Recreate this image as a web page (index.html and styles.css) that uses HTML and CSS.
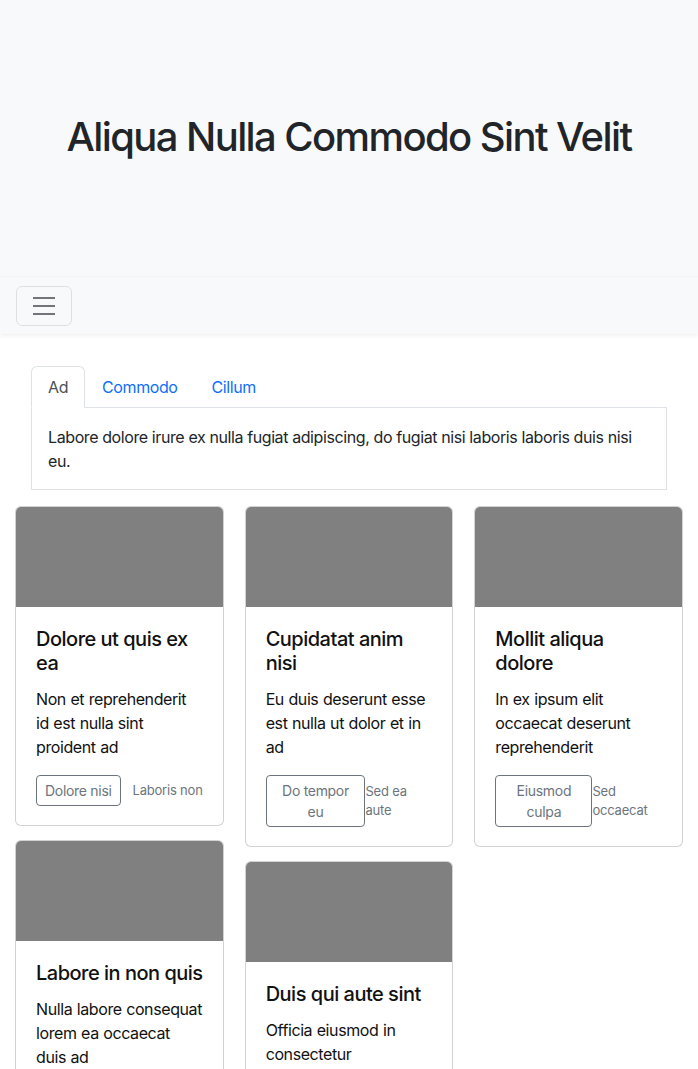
FILE: index.html
```html
<!DOCTYPE html>
<html lang="en">
<head>
<meta charset="utf-8">
<title>Aliqua Nulla Commodo Sint Velit</title>
<link rel="stylesheet" href="styles.css">
</head>
<body>
<header class="hero">
  <h1 class="hero-title">Aliqua Nulla Commodo Sint Velit</h1>
</header>
<nav class="navbar">
  <button class="toggler" type="button" aria-label="Toggle navigation">
    <svg width="30" height="30" viewBox="0 0 30 30" aria-hidden="true">
      <path d="M4 7h22M4 15h22M4 23h22" stroke="#727579" stroke-width="2" stroke-linecap="butt" fill="none"/>
    </svg>
  </button>
</nav>
<main class="main">
  <section class="tabs">
    <ul class="tab-list">
      <li><a class="tab active" href="#">Ad</a></li>
      <li><a class="tab" href="#">Commodo</a></li>
      <li><a class="tab" href="#">Cillum</a></li>
    </ul>
    <div class="tab-pane">Labore dolore irure ex nulla fugiat adipiscing, do fugiat nisi laboris laboris duis nisi eu.</div>
  </section>
  <section class="cards">
    <div class="col">
      <article class="card">
        <div class="card-img"></div>
        <div class="card-body">
          <h5 class="card-title">Dolore ut quis ex ea</h5>
          <p class="card-text">Non et reprehenderit id est nulla sint proident ad</p>
          <div class="card-foot">
            <a class="btn" href="#">Dolore nisi</a>
            <small class="muted">Laboris non</small>
          </div>
        </div>
      </article>
      <article class="card">
        <div class="card-img"></div>
        <div class="card-body">
          <h5 class="card-title">Labore in non quis</h5>
          <p class="card-text">Nulla labore consequat lorem ea occaecat duis ad</p>
          <div class="card-foot">
            <a class="btn" href="#">Anim sint</a>
            <small class="muted">Ut labore</small>
          </div>
        </div>
      </article>
    </div>
    <div class="col">
      <article class="card">
        <div class="card-img"></div>
        <div class="card-body">
          <h5 class="card-title">Cupidatat anim nisi</h5>
          <p class="card-text">Eu duis deserunt esse est nulla ut dolor et in ad</p>
          <div class="card-foot">
            <a class="btn" href="#">Do tempor eu</a>
            <small class="muted">Sed ea aute</small>
          </div>
        </div>
      </article>
      <article class="card">
        <div class="card-img"></div>
        <div class="card-body">
          <h5 class="card-title">Duis qui aute sint</h5>
          <p class="card-text">Officia eiusmod in consectetur</p>
          <div class="card-foot">
            <a class="btn" href="#">Qui minim</a>
            <small class="muted">Ad esse</small>
          </div>
        </div>
      </article>
    </div>
    <div class="col">
      <article class="card">
        <div class="card-img"></div>
        <div class="card-body">
          <h5 class="card-title">Mollit aliqua dolore</h5>
          <p class="card-text">In ex ipsum elit occaecat deserunt reprehenderit</p>
          <div class="card-foot">
            <a class="btn" href="#">Eiusmod culpa</a>
            <small class="muted">Sed occaecat</small>
          </div>
        </div>
      </article>
    </div>
  </section>
</main>
</body>
</html>
```
FILE: styles.css
```css
* { box-sizing: border-box; }

html, body {
  margin: 0;
  padding: 0;
}

body {
  font-family: Inter, "Noto Sans", "Liberation Sans", sans-serif;
  font-size: 16px;
  line-height: 1.5;
  letter-spacing: -0.4px;
  color: #212529;
  background: #fff;
}

.hero {
  background: #f8f9fa;
  padding: 113px 16px 115px;
  text-align: center;
}

.hero-title {
  margin: 0;
  font-size: 40px;
  line-height: 48px;
  font-weight: 500;
  letter-spacing: -1.6px;
}

.navbar {
  background: #f8f9fa;
  border-top: 1px solid #f3f4f6;
  padding: 9px 16px 8px;
  box-shadow: 0 2px 4px rgba(0, 0, 0, 0.06);
  position: relative;
}

.toggler {
  display: flex;
  align-items: center;
  justify-content: center;
  width: 56px;
  height: 40px;
  padding: 0;
  background: transparent;
  border: 1px solid rgba(0, 0, 0, 0.1);
  border-radius: 6px;
}

.main {
  padding: 32px 15px 0;
}

.tabs {
  margin: 0 16px 16px;
}

.tab-list {
  list-style: none;
  margin: 0;
  padding: 0;
  display: flex;
  border-bottom: 1px solid #dee2e6;
}

.tab {
  display: block;
  padding: 8px 16px;
  line-height: 24px;
  border: 1px solid transparent;
  border-top-left-radius: 6px;
  border-top-right-radius: 6px;
  margin-bottom: -1px;
  color: #0d6efd;
  text-decoration: none;
}

.tab.active {
  color: #495057;
  background: #fff;
  border-color: #dee2e6 #dee2e6 #fff;
}

.tab-pane {
  border: 1px solid #dee2e6;
  border-top: 0;
  padding: 17px 16px 16px;
  line-height: 24px;
}

.cards {
  display: grid;
  grid-template-columns: repeat(3, 1fr);
  column-gap: 21px;
  align-items: start;
}

.col {
  display: flex;
  flex-direction: column;
  gap: 14px;
}

.card {
  border: 1px solid rgba(0, 0, 0, 0.175);
  border-radius: 6px;
  background: #fff;
  overflow: hidden;
}

.card-img {
  height: 100px;
  background: #808080;
}

.card-body {
  padding: 20px 20px 19px;
}

.card-title {
  margin: 0 0 12px;
  font-size: 20px;
  line-height: 24px;
  font-weight: 500;
  letter-spacing: -0.5px;
  color: #111;
}

.card-text {
  margin: 0 0 16px;
  line-height: 24px;
  letter-spacing: -0.4px;
  word-spacing: 0.4px;
  color: #111;
}

.card-foot {
  display: flex;
  justify-content: space-between;
  align-items: center;
}

.btn {
  display: inline-block;
  padding: 4px 8px;
  font-size: 14px;
  line-height: 21px;
  letter-spacing: -0.3px;
  color: #6c757d;
  border: 1px solid #6c757d;
  border-radius: 4px;
  text-align: center;
  text-decoration: none;
}

.muted {
  font-size: 13px;
  line-height: 19.5px;
  letter-spacing: -0.2px;
  color: #6c757d;
}
```
